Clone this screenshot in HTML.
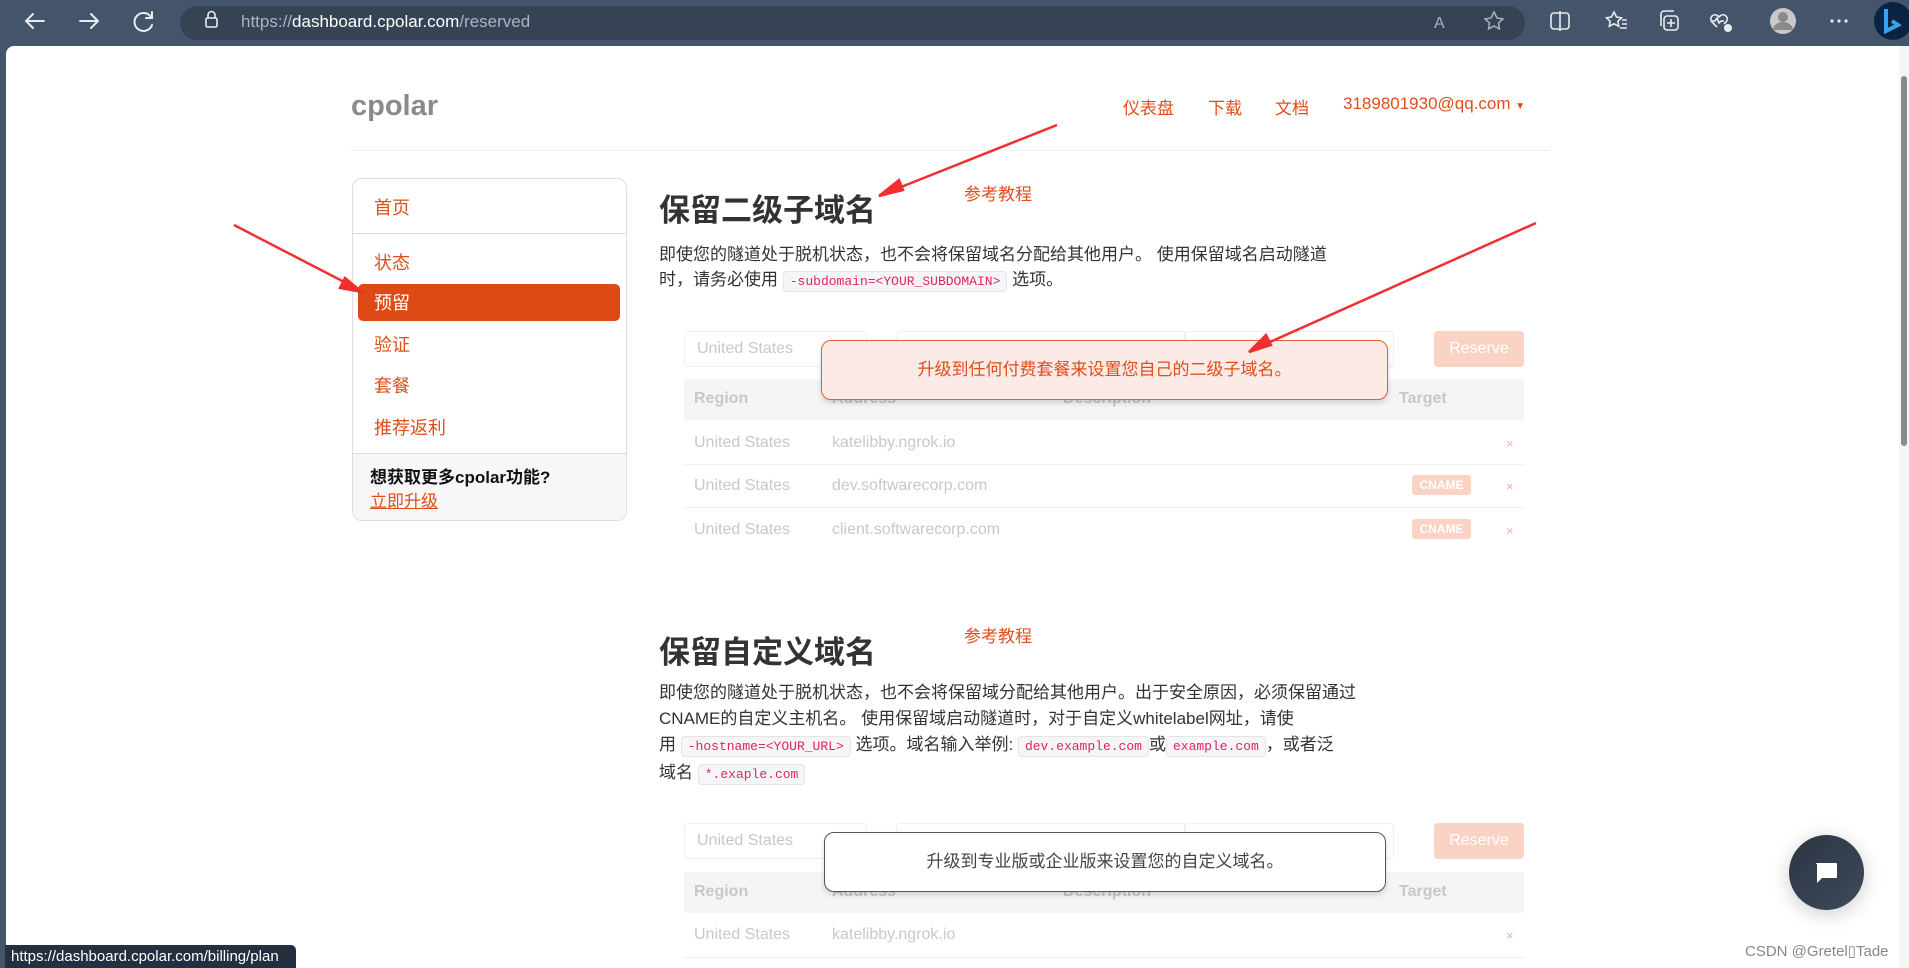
<!DOCTYPE html>
<html><head><meta charset="utf-8"><style>
*{margin:0;padding:0;box-sizing:border-box}
body{width:1909px;height:968px;overflow:hidden;background:#44546a;font-family:"Liberation Sans","Noto Sans CJK SC",sans-serif;position:relative}
.a{position:absolute;white-space:nowrap}
#page{position:absolute;left:6px;top:46px;width:1903px;height:922px;background:#fff;border-top-left-radius:8px;overflow:hidden}
.or{color:#e04e1a}
.code{font-family:"Liberation Mono",monospace;font-size:13px;color:#e0245e;background:#f6f6f8;border:1px solid #e4e4e8;border-radius:4px;padding:2px 6px}
.in{position:absolute;border:1px solid #f0f0f0;border-radius:4px;height:36px}
.th{position:absolute;background:#f5f5f5;height:41px}
.gr{color:#c8c8c8;font-size:16px}
.hd{color:#c8c8c8;font-size:16px;font-weight:bold}
.cn{position:absolute;background:#fbd3c4;color:#fff;font-size:12px;font-weight:bold;border-radius:3px;width:59px;height:20px;text-align:center;line-height:20px}
.x{color:#f4b3a0;font-size:13px}
</style></head><body>
<svg class="a" style="left:0;top:0" width="1909" height="46">
<g stroke="#e8ecf0" stroke-width="2" fill="none" stroke-linecap="round">
<path d="M44 21H26M33 14l-7 7 7 7"/><path d="M80 21h18M91 14l7 7-7 7"/>
<path d="M151 17a9 9 0 1 0 1 8M152 12v6h-6"/>
</g>
<rect x="180" y="6" width="1345" height="34" rx="17" fill="#364355"/>
<rect x="206" y="18" width="11" height="9" rx="1.5" fill="none" stroke="#e8ecf0" stroke-width="1.6"/><path d="M208 18v-3a3.5 3.5 0 0 1 7 0v3" stroke="#e8ecf0" stroke-width="1.6" fill="none"/>
<text x="241" y="27" font-family="Liberation Sans" font-size="17" fill="#aab4c0">https://<tspan fill="#fff">dashboard.cpolar.com</tspan>/reserved</text>
<text x="1434" y="28" font-family="Liberation Sans" font-size="16" fill="#aab4c0">A</text>
<path d="M1494 12l3 6 6 1-4.5 4 1 6-5.5-3-5.5 3 1-6-4.5-4 6-1z" stroke="#aab4c0" stroke-width="1.5" fill="none"/>
<g stroke="#e8ecf0" stroke-width="1.6" fill="none">
<rect x="1551" y="13" width="18" height="16" rx="3"/><path d="M1560 11v20"/>
<path d="M1614 12l2.5 5 5 .8-3.6 3.5.8 5-4.7-2.5-4.7 2.5.8-5-3.6-3.5 5-.8zM1622 20h5M1622 24h5M1620 28h7"/>
<rect x="1664" y="16" width="14" height="14" rx="3"/><path d="M1661 26v-12a3 3 0 0 1 3-3h10M1671 19v8M1667 23h8"/>
<path d="M1717 27l-5-5a4 4 0 0 1 6-6l1 1 1-1a4 4 0 0 1 6 6l-2 2M1711 21h4l2-3 2 5 2-2h3"/>
</g>
<circle cx="1728" cy="28" r="4" fill="#e8ecf0"/>
<circle cx="1783" cy="21" r="13" fill="#c9c9c9"/><circle cx="1783" cy="17" r="5" fill="#8a8a8a"/><path d="M1773 30a10 8 0 0 1 20 0" fill="#8a8a8a"/>
<g fill="#e8ecf0"><circle cx="1832" cy="21" r="1.6"/><circle cx="1839" cy="21" r="1.6"/><circle cx="1846" cy="21" r="1.6"/></g>
<circle cx="1893" cy="21" r="19" fill="#0a2340"/><path d="M1886 9v22l12-6-6-4" stroke="#3aa0f0" stroke-width="4" fill="none"/>
</svg>
<div id="page">
<div class="a" style="left:345px;top:44px;font-size:29px;font-weight:bold;color:#8a8a8a">cpolar</div>
<div class="a or" style="left:1117px;top:48px;font-size:17px">仪表盘</div>
<div class="a or" style="left:1202px;top:48px;font-size:17px">下载</div>
<div class="a or" style="left:1269px;top:48px;font-size:17px">文档</div>
<div class="a or" style="left:1337px;top:48px;font-size:17px">3189801930@qq.com <span style="font-size:10px">▼</span></div>
<div class="a" style="left:345px;top:104px;width:1199px;height:1px;background:#eee"></div>
<div class="a" style="left:346px;top:132px;width:275px;height:343px;border:1px solid #ddd;border-radius:10px;overflow:hidden">
 <div class="a" style="left:0;top:274px;width:275px;height:70px;background:#f7f7f7;border-top:1px solid #ddd"></div>
 <div class="a" style="left:0;top:54px;width:275px;height:1px;background:#ddd"></div>
 <div class="a or" style="left:21px;top:15px;font-size:18px">首页</div>
 <div class="a or" style="left:21px;top:70px;font-size:18px">状态</div>
 <div class="a" style="left:5px;top:105px;width:262px;height:37px;background:#dd4a15;border-radius:5px"></div>
 <div class="a" style="left:21px;top:110px;font-size:18px;color:#fff">预留</div>
 <div class="a or" style="left:21px;top:152px;font-size:18px">验证</div>
 <div class="a or" style="left:21px;top:193px;font-size:18px">套餐</div>
 <div class="a or" style="left:21px;top:235px;font-size:18px">推荐返利</div>
 <div class="a" style="left:17px;top:284px;font-size:17px;font-weight:bold;color:#111">想获取更多cpolar功能?</div>
 <div class="a or" style="left:17px;top:308px;font-size:17px;text-decoration:underline">立即升级</div>
</div>
<div class="a" style="left:653px;top:139px;font-size:31px;font-weight:bold;color:#333">保留二级子域名</div>
<div class="a or" style="left:958px;top:134px;font-size:17px">参考教程</div>
<div class="a" style="left:653px;top:196px;font-size:17px;line-height:25px;color:#333">即使您的隧道处于脱机状态，也不会将保留域名分配给其他用户。 使用保留域名启动隧道<br>时，请务必使用 <span class="code">-subdomain=&lt;YOUR_SUBDOMAIN&gt;</span> 选项。</div>
<div class="in" style="left:678px;top:285px;width:183px"><span class="a gr" style="left:12px;top:8px">United States</span></div>
<div class="in" style="left:890px;top:285px;width:290px"></div>
<div class="in" style="left:1178px;top:285px;width:210px"></div>
<div class="a" style="left:1428px;top:285px;width:90px;height:36px;background:#fbd3c4;border-radius:4px;color:#fff;font-size:16px;text-align:center;line-height:36px">Reserve</div>
<div class="th" style="left:678px;top:333px;width:840px"></div>
<div class="a hd" style="left:688px;top:344px">Region</div><div class="a hd" style="left:826px;top:344px">Address</div><div class="a hd" style="left:1057px;top:344px">Description</div><div class="a hd" style="left:1393px;top:344px">Target</div>
<div class="a gr" style="left:688px;top:388px">United States</div><div class="a gr" style="left:826px;top:388px">katelibby.ngrok.io</div><div class="a x" style="left:1500px;top:390px">×</div>
<div class="a" style="left:678px;top:418px;width:840px;height:1px;background:#f0f0f0"></div>
<div class="a gr" style="left:688px;top:431px">United States</div><div class="a gr" style="left:826px;top:431px">dev.softwarecorp.com</div><div class="cn" style="left:1406px;top:429px">CNAME</div><div class="a x" style="left:1500px;top:433px">×</div>
<div class="a" style="left:678px;top:461px;width:840px;height:1px;background:#f0f0f0"></div>
<div class="a gr" style="left:688px;top:475px">United States</div><div class="a gr" style="left:826px;top:475px">client.softwarecorp.com</div><div class="cn" style="left:1406px;top:473px">CNAME</div><div class="a x" style="left:1500px;top:477px">×</div>
<div class="a" style="left:815px;top:294px;width:567px;height:60px;background:#fbeae6;border:1.5px solid #e0603a;border-radius:10px;box-shadow:0 3px 6px rgba(0,0,0,.15);text-align:center;line-height:57px;font-size:17px;color:#e04e1a">升级到任何付费套餐来设置您自己的二级子域名。</div>
<div class="a" style="left:653px;top:581px;font-size:31px;font-weight:bold;color:#333">保留自定义域名</div>
<div class="a or" style="left:958px;top:576px;font-size:17px">参考教程</div>
<div class="a" style="left:653px;top:634px;font-size:17px;line-height:26px;color:#333">即使您的隧道处于脱机状态，也不会将保留域分配给其他用户。出于安全原因，必须保留通过<br>CNAME的自定义主机名。 使用保留域启动隧道时，对于自定义whitelabel网址，请使<br>用 <span class="code">-hostname=&lt;YOUR_URL&gt;</span> 选项。域名输入举例: <span class="code">dev.example.com</span>或<span class="code">example.com</span>，或者泛<br>域名 <span class="code">*.exaple.com</span></div>
<div class="in" style="left:678px;top:777px;width:183px"><span class="a gr" style="left:12px;top:8px">United States</span></div>
<div class="in" style="left:890px;top:777px;width:290px"></div>
<div class="in" style="left:1178px;top:777px;width:210px"></div>
<div class="a" style="left:1428px;top:777px;width:90px;height:36px;background:#fbd3c4;border-radius:4px;color:#fff;font-size:16px;text-align:center;line-height:36px">Reserve</div>
<div class="th" style="left:678px;top:826px;width:840px"></div>
<div class="a hd" style="left:688px;top:837px">Region</div><div class="a hd" style="left:826px;top:837px">Address</div><div class="a hd" style="left:1057px;top:837px">Description</div><div class="a hd" style="left:1393px;top:837px">Target</div>
<div class="a gr" style="left:688px;top:880px">United States</div><div class="a gr" style="left:826px;top:880px">katelibby.ngrok.io</div><div class="a x" style="left:1500px;top:882px">×</div>
<div class="a" style="left:678px;top:911px;width:840px;height:1px;background:#f0f0f0"></div>
<div class="a" style="left:818px;top:786px;width:562px;height:60px;background:#fff;border:1.5px solid #555;border-radius:10px;box-shadow:0 3px 6px rgba(0,0,0,.15);text-align:center;line-height:57px;font-size:17px;color:#444">升级到专业版或企业版来设置您的自定义域名。</div>
<div class="a" style="left:1783px;top:789px;width:75px;height:75px;border-radius:50%;background:linear-gradient(135deg,#2c3542,#3e4a5a);box-shadow:0 4px 20px rgba(0,0,0,.2)"></div>
<svg class="a" style="left:1807px;top:814px" width="28" height="28"><path d="M3 3h20a1 1 0 0 1 1 1v13a1 1 0 0 1-1 1H9l-5 5V4a1 1 0 0 1-1-1z" fill="#fff"/></svg>
<div class="a" style="left:1739px;top:896px;font-size:15px;color:#888">CSDN @Gretel&#9647;Tade</div>
<div class="a" style="left:1893px;top:0;width:10px;height:922px;background:#f5f5f5"></div>
<div class="a" style="left:1895px;top:30px;width:6px;height:370px;background:#8a8a8a;border-radius:3px"></div>
<svg class="a" style="left:0;top:0" width="1903" height="922">
<g stroke="#f03030" stroke-width="2.5" fill="#f03030">
<path d="M1051 79L885 145"/><path d="M873 150l20-16 4 10z"/>
<path d="M228 179L344 239"/><path d="M356 246l-22-4 5-10z"/>
<path d="M1530 177L1255 300"/><path d="M1243 306l17-17 5 10z"/>
</g>
</svg>
</div>
<div class="a" style="left:5px;top:945px;width:291px;height:23px;background:#243040;border-top-right-radius:5px;color:#fff;font-size:15px;line-height:23px;padding-left:6px">https://dashboard.cpolar.com/billing/plan</div>
</body></html>
